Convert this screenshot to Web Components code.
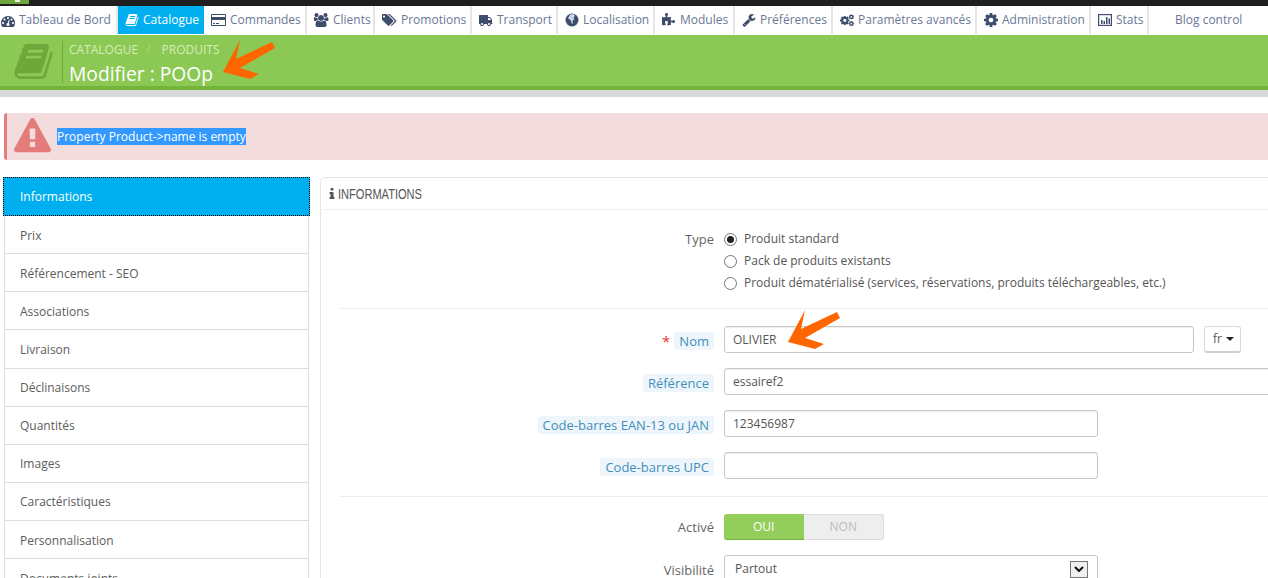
<!DOCTYPE html>
<html lang="fr">
<head>
<meta charset="utf-8">
<title>Modifier : POOp</title>
<style>
    html, body { margin: 0; padding: 0; height: 578px; overflow: hidden; background: #fff; }
    body { font: 13px/18px "Open Sans", "Liberation Sans", sans-serif; color: #666; }
</style>
</head>
<body>
<ps-topbar></ps-topbar>
<ps-nav>
    <ps-nav-item icon="dashboard" w="118" pad="1">Tableau de Bord</ps-nav-item>
    <ps-nav-item icon="book" w="86" active>Catalogue</ps-nav-item>
    <ps-nav-item icon="card" w="103">Commandes</ps-nav-item>
    <ps-nav-item icon="users" w="68">Clients</ps-nav-item>
    <ps-nav-item icon="tags" w="97">Promotions</ps-nav-item>
    <ps-nav-item icon="truck" w="86">Transport</ps-nav-item>
    <ps-nav-item icon="globe" w="97">Localisation</ps-nav-item>
    <ps-nav-item icon="puzzle" w="80">Modules</ps-nav-item>
    <ps-nav-item icon="wrench" w="98">Préférences</ps-nav-item>
    <ps-nav-item icon="cogs" w="144">Paramètres avancés</ps-nav-item>
    <ps-nav-item icon="cog" w="114">Administration</ps-nav-item>
    <ps-nav-item icon="chart" w="58">Stats</ps-nav-item>
    <ps-nav-item w="119" pad="26" last>Blog control</ps-nav-item>
</ps-nav>
<ps-header crumb-a="CATALOGUE" crumb-b="PRODUITS" title-text="Modifier : POOp"></ps-header>
<ps-band></ps-band>
<ps-alert>Property Product-&gt;name is empty</ps-alert>
<ps-layout>
    <ps-tabs slot="tabs">
        <ps-tab active>Informations</ps-tab>
        <ps-tab>Prix</ps-tab>
        <ps-tab>Référencement - SEO</ps-tab>
        <ps-tab>Associations</ps-tab>
        <ps-tab>Livraison</ps-tab>
        <ps-tab>Déclinaisons</ps-tab>
        <ps-tab>Quantités</ps-tab>
        <ps-tab>Images</ps-tab>
        <ps-tab>Caractéristiques</ps-tab>
        <ps-tab>Personnalisation</ps-tab>
        <ps-tab>Documents joints</ps-tab>
    </ps-tabs>
    <ps-panel slot="panel" heading="INFORMATIONS">
        <ps-row label="Type" plain h="63" pt="0">
            <ps-radio checked>Produit standard</ps-radio>
            <ps-radio>Pack de produits existants</ps-radio>
            <ps-radio>Produit dématérialisé (services, réservations, produits téléchargeables, etc.)</ps-radio>
        </ps-row>
        <ps-sep></ps-sep>
        <ps-row label="Nom" required arrow>
            <ps-field w="470">OLIVIER</ps-field>
            <ps-lang>fr</ps-lang>
        </ps-row>
        <ps-row label="Référence"><ps-field w="640">essairef2</ps-field></ps-row>
        <ps-row label="Code-barres EAN-13 ou JAN"><ps-field w="374">123456987</ps-field></ps-row>
        <ps-row label="Code-barres UPC"><ps-field w="374"></ps-field></ps-row>
        <ps-sep style="margin-top: 17px"></ps-sep>
        <ps-row label="Activé" plain style="margin-bottom: 14px"><ps-toggle></ps-toggle></ps-row>
        <ps-row label="Visibilité" plain pt="6"><ps-select w="374">Partout</ps-select></ps-row>
    </ps-panel>
</ps-layout>

<script>
    const ICONS = {
        dashboard: ["0 0 1792 1536", "M384 1152q0-53-37.500-90.500t-90.500-37.500-90.500 37.500-37.500 90.500 37.500 90.500 90.500 37.500 90.500-37.500 37.500-90.500zm192-448q0-53-37.500-90.500t-90.500-37.500-90.500 37.500-37.500 90.500 37.500 90.500 90.500 37.500 90.500-37.500 37.500-90.500zm428 481l101-382q6-26-7.500-48.500t-38.500-29.500-48 6.500-30 39.500l-101 382q-60 5-107 43.500t-63 98.500q-20 77 20 146t117 89 146-20 89-117q16-60-6-117t-72-91zm660-33q0-53-37.500-90.500t-90.500-37.500-90.500 37.500-37.500 90.500 37.500 90.500 90.500 37.500 90.500-37.500 37.500-90.500zm-640-640q0-53-37.500-90.500t-90.500-37.500-90.500 37.500-37.500 90.500 37.500 90.500 90.500 37.500 90.500-37.500 37.500-90.500zm448 192q0-53-37.500-90.500t-90.500-37.500-90.500 37.500-37.500 90.500 37.500 90.500 90.500 37.500 90.500-37.500 37.500-90.500zm320 448q0 261-141 483-19 29-54 29h-1402q-35 0-54-29-141-221-141-483 0-182 71-348t191-286 286-191 348-71 348 71 286 191 191 286 71 348z"],
        book: ["0 0 1792 1792", "M1703 478q40 57 18 129l-275 906q-19 64-76.500 107.500t-122.500 43.500h-923q-77 0-148.500-53.500t-99.500-131.500q-24-67-2-127 0-4 3-27t4-37q1-8-3-21.500t-3-19.500q2-11 8-21t16.500-23.500 16.500-23.500q23-38 45-91.500t30-91.500q3-10 .5-30t-.5-28q3-11 17-28t17-23q21-36 42-92t25-90q1-9-2.500-32t.5-28q4-13 22-30.500t22-22.500q19-26 42.500-84.500t27.500-96.500q1-8-3-25.500t-2-26.500q2-8 9-18t18-23 17-21q8-12 16.500-30.500t15-35 16-36 19.500-32 26.500-23.500 36-11.500 47.500 5.500l-1 3q38-9 51-9h761q74 0 114 56t18 130l-274 906q-36 119-71.500 153.500t-128.500 34.500h-869q-27 0-38 15-11 16-1 43 24 70 144 70h923q29 0 56-15.500t35-41.500l300-987q7-22 5-57 38 15 59 43zm-1064 2q-4 13 2 22.500t20 9.500h608q13 0 25.500-9.500t16.500-22.500l21-64q4-13-2-22.500t-20-9.500h-608q-13 0-25.500 9.500t-16.500 22.500zm-83 256q-4 13 2 22.500t20 9.500h608q13 0 25.500-9.500t16.500-22.500l21-64q4-13-2-22.500t-20-9.500h-608q-13 0-25.500 9.500t-16.500 22.500z"],
        card: ["0 0 1920 1792", "M1760 128q66 0 113 47t47 113v1216q0 66-47 113t-113 47h-1600q-66 0-113-47t-47-113v-1216q0-66 47-113t113-47h1600zm-1600 128q-13 0-22.500 9.500t-9.500 22.500v224h1664v-224q0-13-9.500-22.500t-22.500-9.500h-1600zm1600 1280q13 0 22.500-9.500t9.500-22.500v-608h-1664v608q0 13 9.500 22.500t22.500 9.500h1600zm-1504-128v-128h256v128h-256zm384 0v-128h384v128h-384z"],
        users: ["0 0 1920 1792", "M529 896q-162 5-265 128h-134q-82 0-138-40.500t-56-118.500q0-353 124-353 6 0 43.500 21t97.500 42.500 119 21.500q67 0 133-23-5 37-5 66 0 139 81 256zm1071 637q0 120-73 189.500t-194 69.500h-874q-121 0-194-69.500t-73-189.500q0-53 3.500-103.500t14-109 26.500-108.500 43-97.500 62-81 85.500-53.500 111.500-20q10 0 43 21.500t73 48 107 48 135 21.500 135-21.500 107-48 73-48 43-21.500q61 0 111.500 20t85.500 53.500 62 81 43 97.500 26.500 108.500 14 109 3.500 103.500zm-1024-1277q0 106-75 181t-181 75-181-75-75-181 75-181 181-75 181 75 75 181zm704 384q0 159-112.500 271.500t-271.500 112.500-271.500-112.500-112.500-271.500 112.500-271.500 271.500-112.500 271.500 112.500 112.500 271.500zm576 225q0 78-56 118.500t-138 40.500h-134q-103-123-265-128 81-117 81-256 0-29-5-66 66 23 133 23 59 0 119-21.500t97.500-42.500 43.500-21q124 0 124 353zm-128-609q0 106-75 181t-181 75-181-75-75-181 75-181 181-75 181 75 75 181z"],
        tags: ["0 0 1920 1792", "M384 448q0-53-37.500-90.500t-90.500-37.500-90.500 37.500-37.500 90.500 37.500 90.500 90.500 37.500 90.500-37.500 37.500-90.500zm1067 576q0 53-37 90l-491 492q-39 37-91 37-53 0-90-37l-715-716q-38-37-64.500-101t-26.500-117v-416q0-52 38-90t90-38h416q53 0 117 26.500t102 64.500l715 714q37 39 37 91zm384 0q0 53-37 90l-491 492q-39 37-91 37-36 0-59-14t-53-45l470-470q37-37 37-90 0-52-37-91l-715-714q-38-38-102-64.500t-117-26.500h224q53 0 117 26.500t102 64.500l715 714q37 39 37 91z"],
        truck: ["0 0 1792 1792", "M640 1408q0-52-38-90t-90-38-90 38-38 90 38 90 90 38 90-38 38-90zm-384-512h384v-256h-158q-13 0-22 9l-195 195q-9 9-9 22v30zm1280 512q0-52-38-90t-90-38-90 38-38 90 38 90 90 38 90-38 38-90zm256-1088v1024q0 15-4 26.500t-13.500 18.500-16.500 11.500-23.500 6-22.500 2-25.500 0-22.500-.5q0 106-75 181t-181 75-181-75-75-181h-384q0 106-75 181t-181 75-181-75-75-181h-64q-3 0-22.500.5t-25.500 0-22.500-2-23.500-6-16.500-11.500-13.500-18.500-4-26.500q0-26 19-45t45-19v-320q0-8-.5-35t0-38 2.500-34.500 6.500-37 14-30.500 22.500-30l198-198q19-19 50.500-32t58.500-13h160v-192q0-26 19-45t45-19h1024q26 0 45 19t19 45z"],
        puzzle: ["0 0 1792 1792", "M1664 1098q0 81-44.500 135t-123.500 54q-41 0-77.500-17.500t-59-38-56.500-38-71-17.500q-110 0-110 124 0 39 16 115t15 115v5q-22 0-33 1-34 3-97.500 11.500t-115.500 13.500-98 5q-61 0-103-26.500t-42-83.500q0-37 17.500-71t38-56.500 38-59 17.500-77.500q0-79-54-123.500t-135-44.500q-84 0-143 45.500t-59 127.500q0 43 15 83t33.500 64.500 33.500 53 15 50.500q0 45-46 89-37 35-117 35-95 0-245-24-9-2-27.500-4t-27.500-4l-13-2q-1 0-3-1-2 0-2-1v-1024q2 1 17.500 3.500t34 5 21.500 3.500q150 24 245 24 80 0 117-35 46-44 46-89 0-22-15-50.500t-33.500-53-33.500-64.500-15-83q0-82 59-127.500t144-45.500q80 0 134 44.500t54 123.500q0 41-17.500 77.500t-38 59-38 56.500-17.500 71q0 57 42 83.500t103 26.500q64 0 180-15t163-17v2q-1 2-3.500 17.500t-5 34-3.500 21.500q-24 150-24 245 0 80 35 117 44 46 89 46 22 0 50.500-15t53-33.500 64.500-33.500 83-15q82 0 127.500 59t45.500 143z"],
        wrench: ["0 0 1792 1792", "M448 1472q0-26-19-45t-45-19-45 19-19 45 19 45 45 19 45-19 19-45zm644-420l-682 682q-37 37-90 37-52 0-91-37l-106-108q-38-36-38-90 0-53 38-91l681-681q39 98 114.500 173.500t173.500 114.500zm634-435q0 39-23 106-47 134-164.500 217.500t-258.500 83.500q-185 0-316.500-131.500t-131.500-316.500 131.500-316.500 316.500-131.500q58 0 121.500 16.500t107.500 46.500q16 11 16 28t-16 28l-293 169v224l193 107q5-3 79-48.500t135.500-81 70.500-35.500q15 0 23.500 10t8.500 25z"],
        cog: ["128 128 1536 1536", "M1152 896q0-106-75-181t-181-75-181 75-75 181 75 181 181 75 181-75 75-181zm512-109v222q0 12-8 23t-20 13l-185 28q-19 54-39 91 35 50 107 138 10 12 10 25t-9 23q-27 37-99 108t-94 71q-12 0-26-9l-138-108q-44 23-91 38-16 136-29 186-7 28-36 28h-222q-14 0-24.500-8.500t-11.500-21.500l-28-184q-49-16-90-37l-141 107q-10 9-25 9-14 0-25-11-126-114-165-168-7-10-7-23 0-12 8-23 15-21 51-66.500t54-70.500q-27-50-41-99l-183-27q-13-2-21-12.500t-8-23.500v-222q0-12 8-23t19-13l186-28q14-46 39-92-40-57-107-138-10-12-10-24 0-10 9-23 26-36 98.500-107.500t94.500-71.500q13 0 26 10l138 107q44-23 91-38 16-136 29-186 7-28 36-28h222q14 0 24.500 8.500t11.500 21.500l28 184q49 16 90 37l142-107q9-9 24-9 13 0 25 10 129 119 165 170 7 8 7 22 0 12-8 23-15 21-51 66.500t-54 70.500q26 50 41 98l183 28q13 2 21 12.500t8 23.500z"],
        warning: ["0 0 1792 1792", "M1024 1375v-190q0-14-9.500-23.500t-22.500-9.500h-192q-13 0-22.500 9.500t-9.500 23.500v190q0 14 9.500 23.500t22.500 9.500h192q13 0 22.500-9.500t9.500-23.500zm-2-374l18-459q0-12-10-19-13-11-24-11h-220q-11 0-24 11-10 7-10 21l17 457q0 10 10 16.500t24 6.500h185q14 0 23.500-6.500t10.500-16.500zm-14-934l768 1408q35 63-2 126-17 29-46.500 46t-63.500 17h-1536q-34 0-63.500-17t-46.500-46q-37-63-2-126l768-1408q17-31 47-49t65-18 65 18 47 49z"],
        info: ["512 128 768 1408", "M1216 1344v128q0 26-19 45t-45 19h-512q-26 0-45-19t-19-45v-128q0-26 19-45t45-19h64v-384h-64q-26 0-45-19t-19-45v-128q0-26 19-45t45-19h384q26 0 45 19t19 45v576h64q26 0 45 19t19 45zm-128-1152v192q0 26-19 45t-45 19h-256q-26 0-45-19t-19-45v-192q0-26 19-45t45-19h256q26 0 45 19t19 45z"]
    };

    const WIDE_ICONS = ["card", "users", "tags"];

    /** Icons that are not a single path. */
    function iconMarkup(name) {
        if (name === "globe") {
            return `<svg viewBox="0 0 14 14"><circle cx="7" cy="7" r="6.5" fill="currentColor"/><path d="M5 1.500 8.500 1 10 3 8.500 4.500 9.500 6 7.500 8 8 11 6.500 10 5.500 7 3 5.500z" fill="#c9d3e4"/></svg>`;
        }
        if (name === "chart") {
            return `<svg viewBox="0 0 14 14"><rect x=".6" y="1.600" width="12.800" height="10.800" fill="none" stroke="currentColor" stroke-width="1.200"/><path d="M3 7h1.500v4H3zM5.500 8H7v3H5.500zM8 4h1.500v7H8zM10.500 5.500H12V11h-1.500z" fill="currentColor"/></svg>`;
        }
        if (name === "cogs") {
            const [box, d] = ICONS.cog;
            const cog = (x, y, s) => `<svg x="${x}" y="${y}" width="${s}" height="${s}" viewBox="${box}" style="width:${s}px;height:${s}px"><path d="${d}" fill="currentColor"/></svg>`;
            return `<svg viewBox="0 0 14.500 14">${cog(0, 2.5, 10)}${cog(9, 1, 5.5)}${cog(9, 8, 5.5)}</svg>`;
        }
        const [box, d] = ICONS[name];
        const flip = name === "truck" ? ` style="transform: scaleX(-1)"` : "";
        return `<svg viewBox="${box}"${flip}><path d="${d}" fill="currentColor"/></svg>`;
    }

    class Base extends HTMLElement {
        constructor() {
            super();
            this.attachShadow({ mode: "open" });
        }
        connectedCallback() {
            this.shadowRoot.innerHTML = `<style>${this.css()}</style>${this.html()}`;
        }
        css() { return ":host { display: block; }"; }
        html() { return "<slot></slot>"; }
        attr(name, fallback = "") {
            return this.getAttribute(name) ?? fallback;
        }
    }

    class PsIcon extends Base {
        css() {
            const w = WIDE_ICONS.includes(this.attr("name")) ? "15px" : "var(--size, 14px)";
            return `:host { display: inline-flex; align-items: center; justify-content: center; width: ${w}; height: var(--size, 14px); flex: none; }
                svg { width: 100%; height: 100%; display: block; }`;
        }
        html() { return iconMarkup(this.attr("name")); }
    }

    class PsTopbar extends Base {
        css() {
            return `:host { display: block; height: 6px; background: #1f1f1f; }
                .logo { width: 29px; height: 4px; background: #6fa63b; display: flex; justify-content: center; }
                .logo i { width: 5px; height: 2px; margin-left: 6px; background: #e8f0dd; }`;
        }
        html() { return `<div class="logo"><i></i></div>`; }
    }

    class PsNav extends Base {
        css() { return `:host { display: flex; height: 29px; background: #fff; }`; }
    }

    class PsNavItem extends Base {
        css() {
            const active = this.hasAttribute("active");
            const last = this.hasAttribute("last");
            return `:host { display: flex; align-items: center; box-sizing: border-box; flex: none; height: 28px;
                    width: ${this.attr("w")}px; padding: 0 0 1px ${this.attr("pad", "7")}px; gap: 4px; white-space: nowrap;
                    font-size: 12px; color: ${active ? "#fff" : "#6a7896"}; background: ${active ? "#00aff0" : "transparent"};
                    border-right: ${active || last ? "0" : "2px solid #e6e6e6"}; }
                ps-icon { color: ${active ? "#fff" : "#3f4d6d"}; }`;
        }
        html() {
            const icon = this.attr("icon");
            return `${icon ? `<ps-icon name="${icon}"></ps-icon>` : ""}<span><slot></slot></span>`;
        }
    }

    class PsArrow extends Base {
        css() {
            return `:host { position: absolute; left: var(--x); top: var(--y); width: 53px; height: 40px; pointer-events: none; z-index: 5; }
                svg { display: block; }`;
        }
        html() {
            return `<svg width="53" height="40" viewBox="0 0 53 40"><path d="M0 32 17 0 13 19 49 2 52 8 17 28 36 34 27 39z" fill="#ff6600"/></svg>`;
        }
    }

    class PsHeader extends Base {
        css() {
            return `:host { display: block; position: relative; box-sizing: border-box; height: 55px; background: #8bc954; border-bottom: 4px solid #72b53a; }
                .wrap { display: flex; height: 51px; padding-left: 13px; box-sizing: border-box; }
                .logo { --size: 41px; color: #6ea73a; margin-top: 6px; }
                .text { margin: 6px 0 0 8px; height: 42px; border-left: 1px solid #6fa840; padding-left: 6px; }
                .crumb { font-size: 12px; line-height: 16px; color: #d6ecbd; display: flex; margin: 1px 0 4px; white-space: pre; }
                .crumb i { color: #a8d57e; font-style: normal; margin: 0 11px 0 8px; }
                h2 { margin: 0; font-weight: 400; font-size: 19.3px; line-height: 24px; color: #fff; white-space: nowrap; }
                ps-arrow { --x: 223px; --y: 5px; }`;
        }
        html() {
            return `<div class="wrap"><ps-icon class="logo" name="book"></ps-icon>
                <div class="text"><div class="crumb"><span>${this.attr("crumb-a")}</span><i>/</i><span>${this.attr("crumb-b")}</span></div>
                <h2>${this.attr("title-text")}</h2></div></div><ps-arrow></ps-arrow>`;
        }
    }

    class PsBand extends Base {
        css() { return `:host { display: block; height: 7px; background: #d9d9d9; }`; }
    }

    class PsAlert extends Base {
        css() {
            return `:host { display: flex; align-items: center; box-sizing: border-box; height: 47px; margin: 16px 0 17px 4px; background: #f3dcdd; border-left: 3px solid #e57f7f; border-radius: 3px 0 0 3px; padding-left: 7px; }
                ps-icon { --size: 37px; color: #e37c7a; }
                span { margin-left: 6px; font-size: 12px; line-height: 17px; background: #3399ff; color: #fff; }`;
        }
        html() { return `<ps-icon name="warning"></ps-icon><span><slot></slot></span>`; }
    }

    class PsLayout extends Base {
        css() { return `:host { display: flex; gap: 11px; padding-left: 4px; align-items: flex-start; width: 1400px; }`; }
        html() { return `<slot name="tabs"></slot><slot name="panel"></slot>`; }
    }

    class PsTabs extends Base {
        css() { return `:host { display: block; width: 305px; flex: none; }`; }
    }

    class PsTab extends Base {
        css() {
            const active = this.hasAttribute("active");
            return `:host { display: flex; align-items: center; box-sizing: border-box; font-size: 12px; white-space: nowrap;
                    ${active
                        ? "height: 39px; margin: 0 -1px; padding-left: 17px; background: #00aff0; color: #fff; outline: 1px dotted #000; outline-offset: -1px;"
                        : "height: 38.125px; padding: 2.1px 0 0 15px; color: #5c5c5c; border: 1px solid #ddd; border-top: 0;"} }`;
        }
    }

    class PsPanel extends Base {
        css() {
            return `:host { display: block; box-sizing: border-box; flex: none; width: 1040px; border: 1px solid #e6e6e6; border-radius: 5px; padding: 0 3px 20px; }
                h3 { margin: 0; height: 31px; display: flex; align-items: center; gap: 3px; padding-left: 5px; border-bottom: 1px solid #eee;
                    font: 400 14px "Liberation Sans", sans-serif; color: #555; }
                h3 span { display: inline-block; transform: scaleX(.79); transform-origin: left center; }
                ps-icon { --size: 13px; width: 6px; color: #555; }
                .body { padding-top: 20px; }`;
        }
        html() {
            return `<h3><ps-icon name="info"></ps-icon><span>${this.attr("heading")}</span></h3><div class="body"><slot></slot></div>`;
        }
    }

    class PsSep extends Base {
        css() { return `:host { display: block; height: 1px; background: #eee; margin: 0 16px 17px; }`; }
    }

    class PsRow extends Base {
        css() {
            const h = this.attr("h", "27");
            const pt = this.attr("pt", this.hasAttribute("plain") ? "4" : "6");
            return `:host { display: flex; position: relative; min-height: ${h}px; margin-bottom: 15px; }
                .label { box-sizing: border-box; width: 390px; flex: none; display: flex; justify-content: flex-end; align-items: flex-start; gap: 4px; padding-top: ${pt}px; line-height: 18px; font-size: 13px; white-space: nowrap; }
                .pill { background: #eef6fb; color: #3f8fbc; border-radius: 3px; padding: 0 5px; }
                .plain { color: #666; }
                .star { color: #e33; font-size: 15px; }
                .ctl { margin-left: 10px; display: flex; flex-direction: ${h === "27" ? "row" : "column"}; gap: ${h === "27" ? "10px" : "4px"}; }
                ps-arrow { --x: 464px; --y: -16px; }`;
        }
        html() {
            const plain = this.hasAttribute("plain");
            return `<div class="label">${this.hasAttribute("required") ? `<span class="star">*</span>` : ""}<span class="${plain ? "plain" : "pill"}">${this.attr("label")}</span></div>
                <div class="ctl"><slot></slot></div>${this.hasAttribute("arrow") ? "<ps-arrow></ps-arrow>" : ""}`;
        }
    }

    class PsRadio extends Base {
        css() {
            return `:host { display: flex; align-items: center; height: 18px; font-size: 12px; color: #555; white-space: nowrap; gap: 7px; }
                i { box-sizing: border-box; width: 13px; height: 13px; border: 1px solid #767676; border-radius: 50%; display: flex; align-items: center; justify-content: center; margin-top: 1px; }
                b { width: 7px; height: 7px; border-radius: 50%; background: #222; }`;
        }
        html() {
            return `<i>${this.hasAttribute("checked") ? "<b></b>" : ""}</i><span><slot></slot></span>`;
        }
    }

    class PsField extends Base {
        css() {
            return `:host { display: flex; align-items: center; box-sizing: border-box; flex: none; width: ${this.attr("w")}px; height: 27px; padding-left: 8px; background: #fff; border: 1px solid #c7c7c7; border-radius: 3px; box-shadow: inset 0 1px 1px #eee; font-size: 12px; color: #555; }`;
        }
    }

    class PsLang extends Base {
        css() {
            return `:host { display: flex; align-items: center; box-sizing: border-box; width: 37px; height: 27px; padding-left: 8px; gap: 4px; border: 1px solid #d9d9d9; border-bottom: 2px solid #d0d0d0; border-radius: 3px; font-size: 12px; color: #555; }
                i { width: 0; height: 0; border: 4px solid transparent; border-top-color: #222; border-bottom: 0; }`;
        }
        html() { return `<span><slot></slot></span><i></i>`; }
    }

    class PsToggle extends Base {
        css() {
            return `:host { display: flex; width: 160px; height: 26px; font-size: 12px; line-height: 26px; text-align: center; }
                div { flex: 1; box-sizing: border-box; }
                .on { background: #93cd5b; color: #fff; border-radius: 3px 0 0 3px; border-bottom: 1px solid #72b53a; }
                .off { background: #eee; color: #bbb; border: 1px solid #ddd; border-left: 0; border-radius: 0 3px 3px 0; line-height: 24px; }`;
        }
        html() { return `<div class="on">OUI</div><div class="off">NON</div>`; }
    }

    class PsSelect extends Base {
        css() {
            return `:host { display: flex; align-items: center; justify-content: space-between; box-sizing: border-box; width: ${this.attr("w")}px; height: 27px; padding: 1px 9px 0 10px; background: #fff; border: 1px solid #c7c7c7; border-radius: 3px; font-size: 12px; color: #555; }
                i { box-sizing: border-box; display: flex; align-items: center; justify-content: center; width: 18px; height: 17px; border: 1px solid #777; background: #f0f0f0; }
                svg { display: block; }`;
        }
        html() {
            return `<span><slot></slot></span><i><svg width="10" height="6" viewBox="0 0 10 6"><path d="M1 1l4 4 4-4" fill="none" stroke="#111" stroke-width="2"/></svg></i>`;
        }
    }

    const elements = {
        "ps-icon": PsIcon, "ps-topbar": PsTopbar, "ps-nav": PsNav, "ps-nav-item": PsNavItem,
        "ps-arrow": PsArrow, "ps-header": PsHeader, "ps-band": PsBand, "ps-alert": PsAlert, "ps-layout": PsLayout,
        "ps-tabs": PsTabs, "ps-tab": PsTab, "ps-panel": PsPanel, "ps-sep": PsSep, "ps-row": PsRow,
        "ps-radio": PsRadio, "ps-field": PsField, "ps-lang": PsLang, "ps-toggle": PsToggle, "ps-select": PsSelect
    };
    for (const [name, cls] of Object.entries(elements)) customElements.define(name, cls);
</script>
</body>
</html>
